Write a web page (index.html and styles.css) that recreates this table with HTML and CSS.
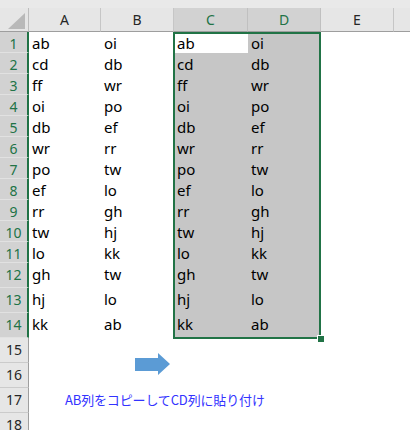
FILE: index.html
```html
<!DOCTYPE html>
<html lang="ja">
<head>
<meta charset="utf-8">
<title>Sheet</title>
<link rel="stylesheet" href="styles.css">
</head>
<body>
<div class="sheet">
  <div class="top"></div>

  <div class="corner"><svg class="tri" width="28" height="23" viewBox="0 0 28 23"><polygon points="25,5 25,21 8,21" fill="#b9b9b9"/></svg></div>
  <div class="ch">A</div><div class="ch">B</div><div class="ch sel">C</div><div class="ch sel">D</div><div class="ch">E</div><div class="ch fill"></div>

  <div class="rh sel">1</div><div class="c">ab</div><div class="c">oi</div><div class="c act">ab</div><div class="c s">oi</div><div class="c"></div><div class="c"></div>
  <div class="rh sel">2</div><div class="c">cd</div><div class="c">db</div><div class="c s">cd</div><div class="c s">db</div><div class="c"></div><div class="c"></div>
  <div class="rh sel">3</div><div class="c">ff</div><div class="c">wr</div><div class="c s">ff</div><div class="c s">wr</div><div class="c"></div><div class="c"></div>
  <div class="rh sel">4</div><div class="c">oi</div><div class="c">po</div><div class="c s">oi</div><div class="c s">po</div><div class="c"></div><div class="c"></div>
  <div class="rh sel">5</div><div class="c">db</div><div class="c">ef</div><div class="c s">db</div><div class="c s">ef</div><div class="c"></div><div class="c"></div>
  <div class="rh sel">6</div><div class="c">wr</div><div class="c">rr</div><div class="c s">wr</div><div class="c s">rr</div><div class="c"></div><div class="c"></div>
  <div class="rh sel">7</div><div class="c">po</div><div class="c">tw</div><div class="c s">po</div><div class="c s">tw</div><div class="c"></div><div class="c"></div>
  <div class="rh sel">8</div><div class="c">ef</div><div class="c">lo</div><div class="c s">ef</div><div class="c s">lo</div><div class="c"></div><div class="c"></div>
  <div class="rh sel">9</div><div class="c">rr</div><div class="c">gh</div><div class="c s">rr</div><div class="c s">gh</div><div class="c"></div><div class="c"></div>
  <div class="rh sel">10</div><div class="c">tw</div><div class="c">hj</div><div class="c s">tw</div><div class="c s">hj</div><div class="c"></div><div class="c"></div>
  <div class="rh sel">11</div><div class="c">lo</div><div class="c">kk</div><div class="c s">lo</div><div class="c s">kk</div><div class="c"></div><div class="c"></div>
  <div class="rh sel">12</div><div class="c">gh</div><div class="c">tw</div><div class="c s">gh</div><div class="c s">tw</div><div class="c"></div><div class="c"></div>
  <div class="rh sel">13</div><div class="c">hj</div><div class="c">lo</div><div class="c s">hj</div><div class="c s">lo</div><div class="c"></div><div class="c"></div>
  <div class="rh sel">14</div><div class="c">kk</div><div class="c">ab</div><div class="c s">kk</div><div class="c s">ab</div><div class="c"></div><div class="c"></div>

  <div class="rh">15</div><div class="blank"></div>
  <div class="rh">16</div><div class="blank"></div>
  <div class="rh">17</div><div class="blank"></div>
  <div class="rh">18</div><div class="blank"></div>

  <div class="selbox"></div>
  <div class="handle"></div>
  <svg class="arrow" width="36" height="24" viewBox="0 0 36 24"><polygon points="0,6 23,6 23,1 35,12 23,23 23,19 0,19" fill="#5b9bd5"/></svg>
  <div class="label">AB列をコピーしてCD列に貼り付け</div>
</div>
</body>
</html>
```

FILE: styles.css
```css
* { box-sizing: border-box; }
html, body { margin: 0; padding: 0; background: #fff; overflow: hidden; }
body { font-family: "Noto Sans", "Liberation Sans", sans-serif; }

.sheet {
  position: relative;
  width: 410px;
  height: 430px;
  display: grid;
  grid-template-columns: 29px 72px 73px 74px 73px 73px 16px;
  grid-template-rows: 8px 24px repeat(11, 21px) repeat(7, 25px);
  overflow: hidden;
}

.top { grid-column: 1 / -1; background: #e9e9e9; }

.corner {
  position: relative;
  background: #e6e6e6;
  border-right: 1px solid #bdbdbd;
  border-bottom: 1px solid #9e9e9e;
}
.tri { display: block; }

.ch {
  background: #e6e6e6;
  border-right: 1px solid #c6c6c6;
  border-bottom: 1px solid #9e9e9e;
  text-align: center;
  font-size: 14px;
  line-height: 20px;
  padding-top: 2px;
  color: #262626;
}
.ch.sel { background: #d2d2d2; color: #217346; border-right-color: #c0c0c0; }
.ch.fill { border-right: none; }

.rh {
  background: #e6e6e6;
  border-right: 1px solid #9e9e9e;
  border-bottom: 1px solid #cbcbcb;
  text-align: center;
  font-size: 14px;
  line-height: 20px;
  padding-top: 2px;
  color: #262626;
}
.rh.sel {
  background: #d2d2d2;
  color: #217346;
  border-right: 2px solid #217346;
  border-bottom-color: #e1e1e1;
}

.c {
  padding: 1px 0 0 3px;
  font-size: 15px;
  line-height: 20px;
  color: #000;
  white-space: nowrap;
  background: #fff;
}
.c.s { background: #c6c6c6; }
.c.act { background: #fff; }

.blank { grid-column: span 6; background: #fff; }

.selbox {
  position: absolute;
  left: 173px;
  top: 32px;
  width: 148px;
  height: 307px;
  border: 2px solid #217346;
}
.handle {
  position: absolute;
  left: 317px;
  top: 335px;
  width: 8px;
  height: 8px;
  background: #217346;
  border: 1px solid #fff;
}
.arrow { position: absolute; left: 135px; top: 352px; }
.label {
  position: absolute;
  left: 65px;
  top: 391px;
  font-family: "Noto Sans CJK JP", "Noto Sans", sans-serif;
  font-size: 13px;
  line-height: 18px;
  letter-spacing: -0.15px;
  color: #3333ff;
  white-space: nowrap;
}
```
